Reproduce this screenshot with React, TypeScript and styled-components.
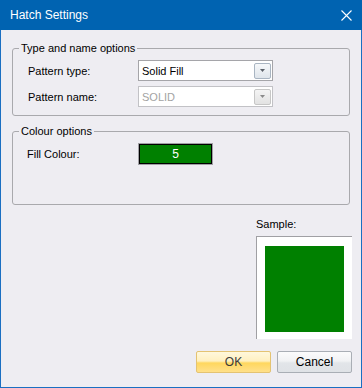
import React from "react";
import styled, { createGlobalStyle } from "styled-components";

const GlobalStyle = createGlobalStyle`
  html, body { margin: 0; padding: 0; background: #ffffff; }
  body { font-family: "Liberation Sans", Arial, sans-serif; font-size: 11px; color: #000; }
  * { box-sizing: border-box; }
`;

const Window = styled.div`
  width: 362px;
  height: 388px;
  border: 1px solid #1a6fc2;
  border-top: none;
  background: #eeedf2;
  display: flex;
  flex-direction: column;
`;

const TitleBar = styled.div`
  height: 30px;
  margin: 0 -1px;
  background: #0063b1;
  display: flex;
  align-items: center;
  justify-content: space-between;
  padding-left: 10px;
  color: #ffffff;
  font-family: "Liberation Sans", Arial, sans-serif;
  font-size: 12px;
`;

const CloseBox = styled.div`
  width: 31px;
  height: 30px;
  display: flex;
  align-items: center;
  justify-content: center;
`;

const Body = styled.div`
  flex: 1;
  display: flex;
  flex-direction: column;
  padding: 11px 9px 0 11px;
`;

const Group = styled.fieldset<{ $mt?: number }>`
  margin: ${(p) => p.$mt ?? 0}px 0 0 0;
  padding: 0;
  width: 338px;
  border: 1px solid #a9a9ad;
  border-radius: 3px;
  min-width: 0;
`;

const Legend = styled.legend`
  margin-left: 6px;
  padding: 0 2px;
  line-height: 14px;
  font-size: 11px;
`;

const GroupContent = styled.div<{ $pl: number; $pb: number; $col: number }>`
  display: grid;
  grid-template-columns: ${(p) => p.$col}px 135px;
  row-gap: 5px;
  padding: 5px 0 ${(p) => p.$pb}px ${(p) => p.$pl}px;
  align-items: center;
`;

const Label = styled.span`
  line-height: 14px;
`;

const Combo = styled.div<{ $disabled?: boolean }>`
  height: 21px;
  width: 135px;
  border: 1px solid ${(p) => (p.$disabled ? "#c2c2c6" : "#a5a5a9")};
  background: #ffffff;
  display: flex;
  align-items: center;
  justify-content: space-between;
  padding: 0 1px 0 3px;
  color: ${(p) => (p.$disabled ? "#a3a3a3" : "#000")};
`;

const DropButton = styled.div<{ $disabled?: boolean }>`
  width: 17px;
  height: 16px;
  border: 1px solid ${(p) => (p.$disabled ? "#c6c6c6" : "#a9b5c2")};
  border-radius: 2px;
  background: ${(p) =>
    p.$disabled
      ? "linear-gradient(#f4f4f4, #e2e2e2)"
      : "linear-gradient(#f6f8fa, #dfe5eb)"};
  display: flex;
  align-items: center;
  justify-content: center;
`;

const ColourButton = styled.div`
  width: 75px;
  height: 22px;
  border: 1px solid #a0a0a4;
  padding: 0;
  display: flex;
`;

const ColourFill = styled.div<{ $color: string }>`
  flex: 1;
  border: 1px solid #000;
  background: ${(p) => p.$color};
  color: #ffffff;
  display: flex;
  align-items: center;
  justify-content: center;
  font-size: 12px;
`;

const SampleColumn = styled.div`
  align-self: flex-end;
  margin-top: 12px;
  display: flex;
  flex-direction: column;
  width: 96px;
`;

const SampleLabel = styled.span`
  line-height: 14px;
  margin-bottom: 5px;
`;

const SampleBox = styled.div`
  width: 96px;
  height: 103px;
  background: #ffffff;
  border-left: 1px solid #a0a0a4;
  border-top: 1px solid #a0a0a4;
  padding: 9px 0 0 8px;
`;

const Swatch = styled.div<{ $color: string }>`
  width: 79px;
  height: 86px;
  background: ${(p) => p.$color};
`;

const ButtonRow = styled.div`
  align-self: flex-end;
  margin-top: 12px;
  display: flex;
  gap: 6px;
`;

const DialogButton = styled.div<{ $primary?: boolean }>`
  width: 75px;
  height: 22px;
  border-radius: 2px;
  display: flex;
  align-items: center;
  justify-content: center;
  font-size: 12px;
  border: 1px solid ${(p) => (p.$primary ? "#e4c372" : "#a9aeb5")};
  background: ${(p) =>
    p.$primary
      ? "linear-gradient(#fff8dc 0%, #fff0c0 45%, #ffd75e 55%, #ffe08a 100%)"
      : "linear-gradient(#fbfbfc 0%, #f1f2f4 45%, #e2e5e9 55%, #dfe2e6 100%)"};
  color: ${(p) => (p.$primary ? "#3b3b3b" : "#000")};
`;

const Arrow = ({ color }: { color: string }) => (
  <svg width="5" height="3" viewBox="0 0 5 3">
    <path d="M0 0 H5 L2.5 3 Z" fill={color} />
  </svg>
);

export default function App() {
  return (
    <>
      <GlobalStyle />
      <Window>
        <TitleBar>
          <span>Hatch Settings</span>
          <CloseBox>
            <svg width="11" height="11" viewBox="0 0 11 11">
              <path d="M0.5 0.5 L10.5 10.5 M10.5 0.5 L0.5 10.5" stroke="#ffffff" strokeWidth="1.1" />
            </svg>
          </CloseBox>
        </TitleBar>
        <Body>
          <Group>
            <Legend>Type and name options</Legend>
            <GroupContent $pl={15} $pb={8} $col={110}>
              <Label>Pattern type:</Label>
              <Combo>
                <span>Solid Fill</span>
                <DropButton>
                  <Arrow color="#5a6068" />
                </DropButton>
              </Combo>
              <Label>Pattern name:</Label>
              <Combo $disabled>
                <span>SOLID</span>
                <DropButton $disabled>
                  <Arrow color="#8a8a8a" />
                </DropButton>
              </Combo>
            </GroupContent>
          </Group>
          <Group $mt={8}>
            <Legend>Colour options</Legend>
            <GroupContent $pl={14} $pb={39} $col={111}>
              <Label>Fill Colour:</Label>
              <ColourButton>
                <ColourFill $color="#008000">5</ColourFill>
              </ColourButton>
            </GroupContent>
          </Group>
          <SampleColumn>
            <SampleLabel>Sample:</SampleLabel>
            <SampleBox>
              <Swatch $color="#008000" />
            </SampleBox>
          </SampleColumn>
          <ButtonRow>
            <DialogButton $primary>OK</DialogButton>
            <DialogButton>Cancel</DialogButton>
          </ButtonRow>
        </Body>
      </Window>
    </>
  );
}
